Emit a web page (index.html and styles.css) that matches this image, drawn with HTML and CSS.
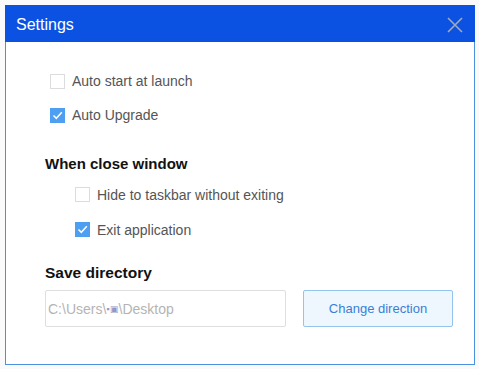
FILE: index.html
```html
<!DOCTYPE html>
<html lang="en">
<head>
  <meta charset="UTF-8" />
  <title>Settings</title>
  <link rel="stylesheet" href="styles.css">
</head>
<body>
  <div class="dialog">
    <div class="titlebar">
      <span class="title">Settings</span>
      <svg class="close" width="16" height="16" viewBox="0 0 16 16">
        <path d="M1 1 L15 15 M15 1 L1 15" stroke="#a3a9b8" stroke-width="1.6" fill="none" />
      </svg>
    </div>
    <div class="content">
      <label class="option">
        <span class="box"></span>
        <span>Auto start at launch</span>
      </label>
      <label class="option">
        <span class="box checked">
          <svg width="15" height="15" viewBox="0 0 15 15"><path d="M3.5 7.5 L6.3 10.3 L11.8 4.2" stroke="#fff" stroke-width="1.5" fill="none" /></svg>
        </span>
        <span>Auto Upgrade</span>
      </label>

      <h3 class="section">When close window</h3>
      <label class="option sub">
        <span class="box"></span>
        <span>Hide to taskbar without exiting</span>
      </label>
      <label class="option sub">
        <span class="box checked">
          <svg width="15" height="15" viewBox="0 0 15 15"><path d="M3.5 7.5 L6.3 10.3 L11.8 4.2" stroke="#fff" stroke-width="1.5" fill="none" /></svg>
        </span>
        <span>Exit application</span>
      </label>

      <h3 class="section save">Save directory</h3>
      <div class="dir-row">
        <div class="path">C:\Users\<span class="blot">&#9642;&#9635;</span>\Desktop</div>
        <button class="change">Change direction</button>
      </div>
    </div>
  </div>
</body>
</html>
```

FILE: styles.css
```css
body {
  margin: 0;
  background: #fafafa;
  font-family: "Liberation Sans", Arial, sans-serif;
}
.dialog {
  margin: 5px;
  width: 468px;
  height: 359px;
  background: #fff;
  border: 1px solid #4a92e0;
  border-top: none;
  display: flex;
  flex-direction: column;
}
.titlebar {
  height: 37px;
  margin: 0 -1px;
  background: #0b52e3;
  display: flex;
  align-items: center;
  justify-content: space-between;
  padding: 0 12px 0 11px;
}
.title {
  color: #fff;
  font-size: 16px;
  margin-top: 2px;
}
.close {
  margin-top: 2px;
}
.content {
  padding: 22px 0 0 0;
  display: flex;
  flex-direction: column;
}
.option {
  height: 34px;
  display: flex;
  align-items: center;
  padding-left: 44px;
  font-size: 14px;
  color: #555;
}
.option.sub {
  height: 35px;
  padding-left: 69px;
}
.box {
  width: 13px;
  height: 13px;
  border: 1px solid #dcdcdc;
  background: #fff;
  margin-right: 7px;
  display: flex;
}
.box.checked {
  width: 15px;
  height: 15px;
  border: none;
  background: #4e9ff2;
}
.section {
  margin: 22px 0 3px 39px;
  font-size: 15px;
  line-height: 20px;
  color: #111;
}
.section.save {
  margin-top: 16px;
  margin-bottom: 7px;
  font-size: 15.5px;
}
.dir-row {
  display: flex;
  padding-left: 39px;
  gap: 17px;
}
.path {
  width: 237px;
  height: 35px;
  border: 1px solid #dedede;
  border-radius: 2px;
  font-size: 14px;
  color: #b4b4b4;
  display: flex;
  align-items: center;
  padding-left: 2px;
}
.blot {
  color: #9098c8;
  font-size: 9px;
}
.change {
  width: 150px;
  height: 37px;
  border: 1px solid #93c3ef;
  border-radius: 2px;
  background: #eef6fe;
  color: #3b7fd4;
  font-family: "Liberation Sans", Arial, sans-serif;
  font-size: 13px;
}
```
